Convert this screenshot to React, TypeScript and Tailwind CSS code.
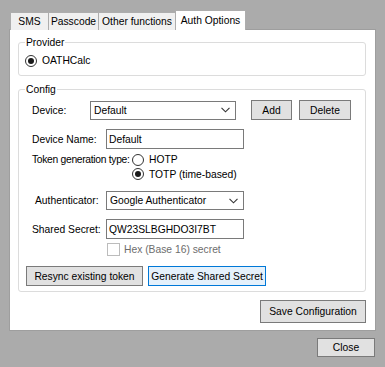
import React from "react";

const font = "font-['Liberation_Sans',Arial,sans-serif] text-[10.3px] leading-[13px] text-black whitespace-nowrap";

function Chevron() {
  return (
    <svg width="9" height="6" viewBox="0 0 9 6" className="shrink-0">
      <path d="M0.5 0.8 L4.5 4.8 L8.5 0.8" fill="none" stroke="#333" strokeWidth="1.1" />
    </svg>
  );
}

function Select({ value, w }: { value: string; w: string }) {
  return (
    <div className={`${w} h-[19px] border border-[#7a7a7a] bg-white flex items-center justify-between pl-[3px] pr-[5px]`}>
      <span>{value}</span>
      <Chevron />
    </div>
  );
}

function Input({ value }: { value: string }) {
  return (
    <div className="w-[138px] h-[20px] border border-[#7a7a7a] bg-white flex items-center pl-[2px]">
      {value}
    </div>
  );
}

function Radio({ on }: { on?: boolean }) {
  return (
    <div className="w-[12px] h-[12px] rounded-full border border-[#333] bg-white flex items-center justify-center shrink-0">
      {on && <div className="w-[6px] h-[6px] rounded-full bg-[#1a1a1a]" />}
    </div>
  );
}

function Button({ label, w, h = "h-[20px]", focus }: { label: string; w: string; h?: string; focus?: boolean }) {
  return (
    <div
      className={`${w} ${h} border flex items-center justify-center ${
        focus ? "border-[#0078d7] bg-[#e5f1fb]" : "border-[#7a7a7a] bg-[#e1e1e1]"
      }`}
    >
      {label}
    </div>
  );
}

function Group({ title, className, children }: { title: string; className: string; children: React.ReactNode }) {
  return (
    <div className={`relative border border-[#dcdcdc] rounded-[3px] ${className}`}>
      <span className="absolute left-[6px] top-[-7px] bg-white px-[1px]">{title}</span>
      {children}
    </div>
  );
}

export default function App() {
  const tabs = [
    { t: "SMS", w: "w-[39px]" },
    { t: "Passcode", w: "w-[51px]" },
    { t: "Other functions", w: "w-[78px]" },
  ];
  return (
    <div className={`w-[385px] h-[367px] bg-[#ababab] pt-[10px] pl-[9px] ${font}`}>
      <div className="flex items-end h-[20px] relative z-10 pl-px">
        {tabs.map(({ t, w }) => (
          <div key={t} className={`${w} h-[18px] border border-b-0 border-[#adadad] bg-[#f0f0f0] flex items-center justify-center -mr-px`}>
            {t}
          </div>
        ))}
        <div className="w-[71px] h-[20px] border border-b-0 border-[#adadad] bg-white flex items-center justify-center">Auth Options</div>
      </div>
      <div className="w-[367px] h-[302px] -mt-px border border-[#9e9e9e] bg-white pt-[12px] pl-[8px]">
        <Group title="Provider" className="w-[348px] h-[34px] flex items-center pl-[6px] gap-[5px] pt-[3px]">
          <Radio on />
          <span>OATHCalc</span>
        </Group>
        <Group title="Config" className="w-[348px] h-[203px] mt-[13px] pl-[13px] pt-[10px]">
          <div className="flex items-center h-[20px]">
            <span className="w-[58px]">Device:</span>
            <Select value="Default" w="w-[146px]" />
            <div className="ml-[15px] flex gap-[7px]">
              <Button label="Add" w="w-[41px]" />
              <Button label="Delete" w="w-[52px]" />
            </div>
          </div>
          <div className="flex items-center h-[20px] mt-[9px]">
            <span className="w-[74px]">Device Name:</span>
            <Input value="Default" />
          </div>
          <div className="flex mt-[3px]">
            <span className="w-[100px] shrink-0 pt-[1px] tracking-[-0.3px]">Token generation type:</span>
            <div className="flex flex-col gap-[1px]">
              <div className="flex items-center gap-[5px] h-[14px] pt-[1px]">
                <Radio />
                <span>HOTP</span>
              </div>
              <div className="flex items-center gap-[5px] h-[14px]">
                <Radio on />
                <span>TOTP (time-based)</span>
              </div>
            </div>
          </div>
          <div className="flex items-center h-[19px] mt-[10px]">
            <span className="w-[74px] pl-[3px]">Authenticator:</span>
            <Select value="Google Authenticator" w="w-[138px]" />
          </div>
          <div className="flex items-center h-[20px] mt-[9px]">
            <span className="w-[74px]">Shared Secret:</span>
            <Input value="QW23SLBGHDO3I7BT" />
          </div>
          <div className="flex items-center mt-[4px] ml-[75px] gap-[4px] text-[#6d6d6d]">
            <div className="w-[13px] h-[13px] border border-[#bcbcbc] bg-white" />
            <span>Hex (Base 16) secret</span>
          </div>
          <div className="flex gap-[5px] mt-[10px] -ml-[6px]">
            <Button label="Resync existing token" w="w-[117px]" />
            <Button label="Generate Shared Secret" w="w-[118px]" focus />
          </div>
        </Group>
        <div className="flex justify-end w-[348px] mt-[8px]">
          <Button label="Save Configuration" w="w-[106px]" h="h-[23px]" />
        </div>
      </div>
      <div className="flex justify-end w-[366px] mt-[7px]">
        <Button label="Close" w="w-[58px]" h="h-[19px]" />
      </div>
    </div>
  );
}
